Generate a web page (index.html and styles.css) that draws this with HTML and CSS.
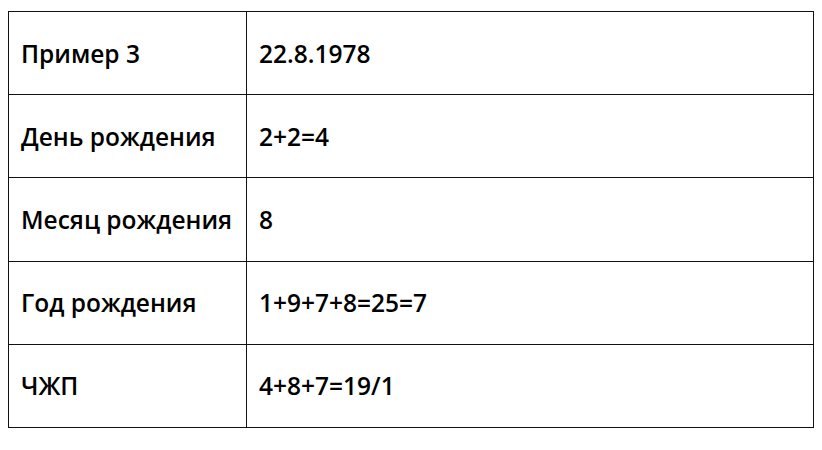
FILE: index.html
```html
<!DOCTYPE html>
<html lang="ru">
<head>
<meta charset="utf-8">
<link rel="stylesheet" href="styles.css">
</head>
<body>
<table class="grid">
  <tr><td class="label">Пример 3</td><td class="value">22.8.1978</td></tr>
  <tr><td class="label">День рождения</td><td class="value">2+2=4</td></tr>
  <tr><td class="label">Месяц рождения</td><td class="value">8</td></tr>
  <tr><td class="label">Год рождения</td><td class="value">1+9+7+8=25=7</td></tr>
  <tr><td class="label">ЧЖП</td><td class="value">4+8+7=19/1</td></tr>
</table>
</body>
</html>
```
FILE: styles.css
```css
html, body {
  margin: 0;
  background: #fff;
}
body {
  padding: 11px 0 0 8px;
  font-family: "Open Sans", "DejaVu Sans", sans-serif;
  color: #000;
}
.grid {
  border-collapse: collapse;
  width: 806px;
}
.grid td {
  border: 1.5px solid #111;
  height: 83.2px;
  padding: 0 12px;
  font-size: 24.5px;
  font-weight: 600;
  vertical-align: middle;
  box-sizing: border-box;
}
.grid td.label {
  width: 238px;
}
```
